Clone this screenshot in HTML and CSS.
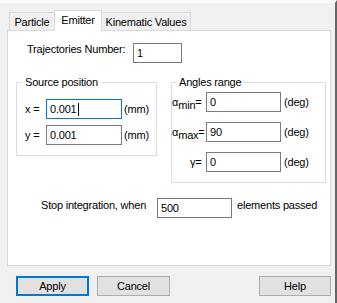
FILE: index.html
```html
<!DOCTYPE html>
<html>
	<head>
		<meta charset="UTF-8">
		<title>Emitter</title>
		<link rel="stylesheet" href="styles.css">
	</head>
	<body>
		<div class="window">
			<div class="tabs">
				<div class="tab tab-particle">Particle</div>
				<div class="tab tab-active">Emitter</div>
				<div class="tab tab-kinematic">Kinematic Values</div>
			</div>
			<div class="panel">
				<div class="row row-top traj">
					<span class="traj-lbl">Trajectories Number:</span>
					<div class="box traj-box">1</div>
				</div>
				<div class="groups">
					<fieldset class="group source">
						<legend>Source position</legend>
						<div class="row">
							<span class="src-lbl">x =</span>
							<div class="box src-box focused">0.001<span class="caret"></span></div>
							<span class="unit">(mm)</span>
						</div>
						<div class="row">
							<span class="src-lbl">y =</span>
							<div class="box src-box">0.001</div>
							<span class="unit">(mm)</span>
						</div>
					</fieldset>
					<fieldset class="group angles">
						<legend>Angles range</legend>
						<div class="row">
							<span class="ang-lbl">&alpha;<sub>min</sub>= </span>
							<div class="box ang-box">0</div>
							<span class="unit">(deg)</span>
						</div>
						<div class="row">
							<span class="ang-lbl">&alpha;<sub>max</sub>=</span>
							<div class="box ang-box">90</div>
							<span class="unit">(deg)</span>
						</div>
						<div class="row">
							<span class="ang-lbl gamma">&gamma;=</span>
							<div class="box ang-box">0</div>
							<span class="unit">(deg)</span>
						</div>
					</fieldset>
				</div>
				<div class="row row-top stop">
					<span class="stop-lbl">Stop integration, when</span>
					<div class="box stop-box">500</div>
					<span class="unit">elements passed</span>
				</div>
			</div>
			<div class="buttons">
				<button class="btn btn-default">Apply</button>
				<button class="btn">Cancel</button>
				<button class="btn btn-help">Help</button>
			</div>
		</div>
	</body>
</html>
```

FILE: styles.css
```css
* {box-sizing:border-box;}
body {margin:0; background:#f0f0f0; color:#000; font:11px/13px "Liberation Sans", Arial, sans-serif; letter-spacing:-0.2px;}
.window {width:337px; height:303px; border-top:3px solid #fafafa; border-right:2px solid #666;}

/* tabs */
.tabs {display:flex; align-items:flex-end; height:21px; margin:7px 0 -1px 9px;}
.tab {height:18px; margin-bottom:1px; padding-top:3px; border:1px solid #d9d9d9; border-bottom:none; background:#f0f0f0; text-align:center; white-space:nowrap;}
.tab-particle {width:45px; border-right:none;}
.tab-active {width:48px; height:21px; margin-bottom:0; background:#fff; position:relative; z-index:1;}
.tab-kinematic {width:89px; border-left:none;}

.panel {margin-left:7px; width:324px; height:236px; border:1px solid #d9d9d9; background:#fff;}

/* rows and text boxes */
.row {display:flex; align-items:center; height:20px; white-space:nowrap;}
.row-top {align-items:flex-start;}
.box {height:20px; border:1px solid #7a7a7a; padding-left:3px; line-height:18px; background:#fff; white-space:nowrap;}
.box.focused {border-color:#0078d7;}
.caret {display:inline-block; width:1px; height:13px; margin-left:1px; background:#000; vertical-align:-3px;}

.traj {margin:12px 0 0 19px;}
.traj-lbl {width:106px;}
.traj-box {width:49px;}

/* group boxes */
.groups {display:flex; align-items:flex-start; gap:14px; margin:13px 0 0 8px;}
.group {margin:0; min-width:0; border:1px solid #dcdcdc;}
.group legend {padding:0 3px; line-height:13px;}

.source {width:141px; padding:10px 0 10px 8px;}
.source legend {margin-left:-3px;}
.source .row + .row {margin-top:6px;}
.src-lbl {width:21px;}
.src-box {width:76px;}
.unit {margin-left:2px;}

.angles {width:155px; padding:3px 0 10px 0;}
.angles legend {margin-left:4px;}
.angles .row + .row {margin-top:10px;}
.ang-lbl {width:34px;}
.ang-lbl sub {font-size:11px; line-height:0; vertical-align:-3px;}
.ang-lbl.gamma {padding-left:18px;}
.ang-box {width:75px;}
.angles .unit {margin-left:3px;}

.stop {margin:15px 0 0 33px;}
.stop-lbl {width:116px; padding-top:1px;}
.stop-box {width:75px;}
.stop .unit {margin-left:5px; padding-top:1px;}

/* buttons */
.buttons {display:flex; gap:8px; margin-top:10px; padding:0 4px 0 16px;}
.btn {width:73px; height:20px; padding:0; border:1px solid #adadad; background:#e1e1e1; color:#000; font:inherit; letter-spacing:inherit;}
.btn-default {border:2px solid #0078d7;}
.btn-help {width:72px; margin-left:auto;}
```
